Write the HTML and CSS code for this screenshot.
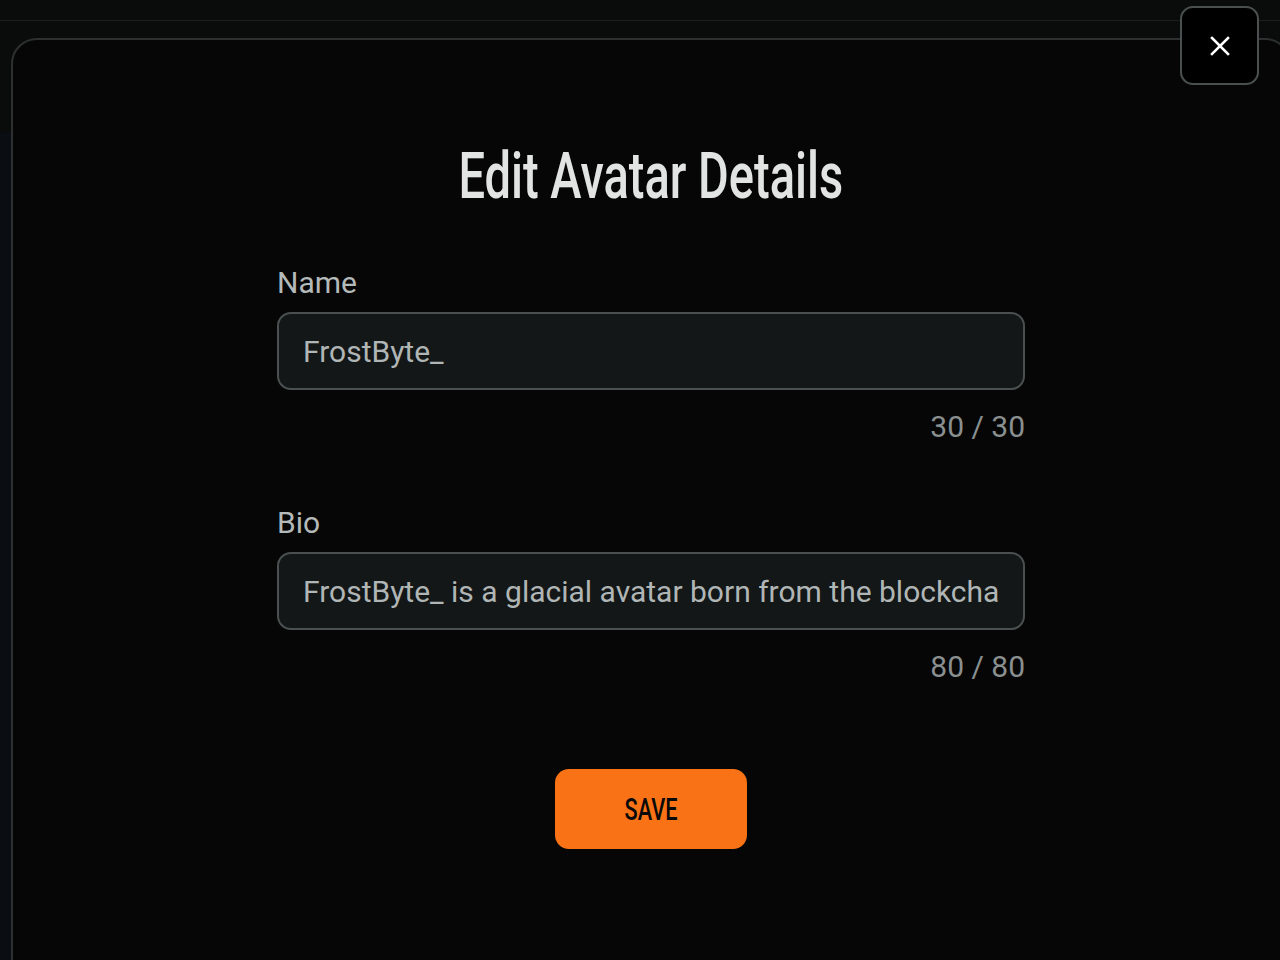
FILE: index.html
```html
<!DOCTYPE html>
<html lang="en">
<head>
  <meta charset="UTF-8" />
  <meta name="viewport" content="width=device-width, initial-scale=1.0"/>
  <title>Edit Avatar Details</title>
  <link rel="stylesheet" href="styles.css">
</head>
<body>

  <!-- page behind the dialog -->
  <div class="app">
    <div class="topbar"></div>
    <div class="subbar"></div>
    <div class="content"></div>
  </div>

  <!-- Edit dialog -->
  <div class="modal">
    <h1 class="modal-title"><span class="narrow">Edit Avatar Details</span></h1>

    <form class="edit-form" onsubmit="return false">
      <div class="field">
        <label for="avatar-name">Name</label>
        <input id="avatar-name" type="text" maxlength="30" value="FrostByte_">
        <div class="counter">30 / 30</div>
      </div>

      <div class="field">
        <label for="avatar-bio">Bio</label>
        <input id="avatar-bio" type="text" maxlength="80" value="FrostByte_ is a glacial avatar born from the blockchain's coldest data streams.">
        <div class="counter">80 / 80</div>
      </div>

      <button class="save-btn" type="submit"><span class="narrow save-label">SAVE</span></button>
    </form>
  </div>

  <button class="close-btn" aria-label="Close">
    <svg width="22" height="22" viewBox="0 0 22 22" fill="none" stroke="#ffffff" stroke-width="2.6" stroke-linecap="square">
      <line x1="3" y1="3" x2="19" y2="19"/>
      <line x1="19" y1="3" x2="3" y2="19"/>
    </svg>
  </button>

</body>
</html>
```

FILE: styles.css
```css
body {
  margin: 0;
  height: 960px;
  overflow: hidden;
  background: #0a0c0c;
  font-family: Roboto, 'Noto Sans', sans-serif;
  color: #b4b9b9;
}

.app {
  height: 100%;
  display: flex;
  flex-direction: column;
}

.topbar {
  height: 20px;
  border-bottom: 1px solid #1a1e1e;
}

.subbar {
  height: 112px;
}

.content {
  flex: 1;
  background: #0a0e12;
}

.modal {
  position: absolute;
  top: 38px;
  left: 11px;
  width: 1280px;
  height: 960px;
  box-sizing: border-box;
  background: #060606;
  border: 2px solid #2c3030;
  border-radius: 26px;
  display: flex;
  flex-direction: column;
  align-items: center;
  padding-top: 93px;
}

/* no condensed face installed, so squeeze the glyphs */
.narrow {
  display: inline-block;
  transform: scaleX(0.735);
  transform-origin: center;
}

.modal-title {
  margin: 0;
  font-family: Roboto, sans-serif;
  font-weight: 500;
  font-size: 64px;
  line-height: 88px;
  color: #e2e4e4;
}

.edit-form {
  width: 748px;
  margin-top: 45px;
  display: flex;
  flex-direction: column;
}

.field {
  display: flex;
  flex-direction: column;
  margin-bottom: 61px;
}

.field label {
  font-size: 30px;
  line-height: 34px;
  color: #b4b9b9;
  margin-bottom: 12px;
}

.field input {
  height: 78px;
  box-sizing: border-box;
  padding: 0 24px;
  background: #131717;
  border: 2px solid #4a5050;
  border-radius: 14px;
  font-family: Roboto, 'Noto Sans', sans-serif;
  font-size: 30px;
  color: #b0b5b5;
  outline: none;
}

.counter {
  align-self: flex-end;
  margin-top: 19px;
  font-size: 30px;
  line-height: 36px;
  color: #8a9090;
}

.save-btn {
  align-self: center;
  margin-top: 23px;
  width: 192px;
  height: 80px;
  padding: 0;
  border: none;
  border-radius: 14px;
  background: #f97316;
  color: #0a0a0a;
  font-family: Roboto, sans-serif;
  font-weight: 500;
  font-size: 32px;
  cursor: pointer;
}

.save-label {
  transform: scaleX(0.68);
}

.close-btn {
  position: absolute;
  top: 6px;
  left: 1180px;
  width: 79px;
  height: 79px;
  padding: 0;
  background: #000;
  border: 2px solid #4a5050;
  border-radius: 13px;
  display: flex;
  align-items: center;
  justify-content: center;
  cursor: pointer;
}
```
